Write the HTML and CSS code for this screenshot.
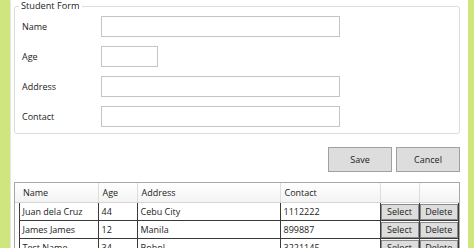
FILE: index.html
```html
<!DOCTYPE html>
<html>
<head>
<meta charset="utf-8">
<link rel="stylesheet" href="styles.css">
</head>
<body>
<div class="window">
  <fieldset class="form">
    <legend>Student Form</legend>
    <div class="row"><label>Name</label><input class="field wide" type="text"></div>
    <div class="row"><label>Age</label><input class="field short" type="text"></div>
    <div class="row"><label>Address</label><input class="field wide" type="text"></div>
    <div class="row"><label>Contact</label><input class="field wide" type="text"></div>
  </fieldset>
  <div class="actions">
    <button class="btn">Save</button>
    <button class="btn">Cancel</button>
  </div>
  <div class="grid-wrap">
    <table class="grid">
      <colgroup>
        <col class="c-rh"><col class="c-name"><col class="c-age"><col class="c-addr"><col class="c-contact"><col class="c-sel"><col class="c-del">
      </colgroup>
      <thead>
        <tr><th class="rh"></th><th>Name</th><th>Age</th><th>Address</th><th>Contact</th><th></th><th class="last"></th></tr>
      </thead>
      <tbody>
        <tr><td class="rh"></td><td>Juan dela Cruz</td><td>44</td><td>Cebu City</td><td>1112222</td><td class="bc"><button class="cellbtn">Select</button></td><td class="bc"><button class="cellbtn">Delete</button></td></tr>
        <tr><td class="rh"></td><td>James James</td><td>12</td><td>Manila</td><td>899887</td><td class="bc"><button class="cellbtn">Select</button></td><td class="bc"><button class="cellbtn">Delete</button></td></tr>
        <tr><td class="rh"></td><td>Test Name</td><td>34</td><td>Bohol</td><td>3221145</td><td class="bc"><button class="cellbtn">Select</button></td><td class="bc"><button class="cellbtn">Delete</button></td></tr>
      </tbody>
    </table>
  </div>
</div>
</body>
</html>
```

FILE: styles.css
```css
html, body {
  margin: 0;
  padding: 0;
  height: 100%;
  overflow: hidden;
}
body {
  background: #cfe67f;
  font-family: "Open Sans", "Noto Sans", sans-serif;
  font-size: 9px;
  color: #222;
}
.window {
  margin-left: 10px;
  width: 458px;
  height: 100%;
  box-sizing: border-box;
  background: #fff;
  border-left: 1px solid #e4e4e4;
  padding: 0 8px 0 3px;
}
.form {
  margin: 0;
  border: 1px solid #dcdcdc;
  border-radius: 3px;
  padding: 4px 6px 6px 7px;
  display: flex;
  flex-direction: column;
  gap: 9px;
}
.form legend {
  padding: 0 2px;
  margin-left: -3px;
  line-height: 12px;
  font-size: 9.2px;
  color: #222;
}
.row {
  display: flex;
  align-items: center;
  height: 21px;
}
.row label {
  width: 79px;
  flex: none;
}
.field {
  height: 21px;
  box-sizing: border-box;
  border: 1px solid #c4c4c4;
  margin: 0;
  padding: 0;
  background: #fff;
}
.wide { width: 239px; }
.short { width: 57px; }
.actions {
  display: flex;
  justify-content: flex-end;
  gap: 4px;
  margin-top: 13px;
}
.btn {
  width: 64px;
  height: 25px;
  margin: 0;
  background: #dddddd;
  border: 1px solid #a0a0a0;
  font-family: inherit;
  font-size: 9px;
  color: #222;
  padding: 0;
}
.grid-wrap {
  margin-top: 10px;
  border: 1px solid #a8a8a8;
  border-bottom: none;
  width: 446px;
  box-sizing: border-box;
}
.grid {
  border-collapse: collapse;
  table-layout: fixed;
  width: 100%;
}
.c-rh { width: 4px; }
.c-name { width: 79px; }
.c-age { width: 39px; }
.c-addr { width: 143px; }
.c-contact { width: 100px; }
.c-sel { width: 39px; }
.c-del { width: auto; }
.grid th {
  height: 19px;
  padding: 0 0 0 4px;
  text-align: left;
  font-weight: normal;
  background: linear-gradient(#ffffff, #f3f3f3);
  border-right: 1px solid #dedede;
  border-bottom: 1px solid #d4d4d4;
  color: #222;
}
.grid th.rh { border-right: none; padding: 0; }
.grid th.last { border-right: none; }
.grid td {
  height: 17px;
  padding: 0 0 0 3px;
  border: 1px solid #3a3a3a;
  white-space: nowrap;
  overflow: hidden;
  color: #222;
}
.grid td.rh {
  border-left: none;
  border-top: none;
  border-bottom: none;
  padding: 0;
  background: #fff;
}
.grid td.bc {
  padding: 0;
  border-color: #3a3a3a;
}
.cellbtn {
  display: block;
  width: 100%;
  height: 16px;
  margin: 0;
  padding: 0;
  background: #dddddd;
  border: 1px solid #8a8a8a;
  font-family: inherit;
  font-size: 9px;
  color: #222;
}
```
